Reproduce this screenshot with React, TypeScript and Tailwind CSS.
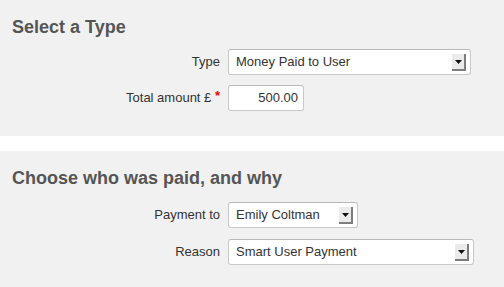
const font = { fontFamily: '"Liberation Sans", Arial, Helvetica, sans-serif' }

function DropButton() {
  return (
    <div className="mb-[3px] flex h-[17px] w-[14px] shrink-0 items-center justify-center border-r-2 border-b-2 border-r-[#7d7d7d] border-b-[#7d7d7d] bg-[#ebebeb]">
      <svg width="7" height="4" viewBox="0 0 7 4">
        <path d="M0 0h7L3.5 4z" fill="#111" />
      </svg>
    </div>
  )
}

function FakeSelect({ value, width }: { value: string; width: string }) {
  return (
    <div
      className={`flex h-[26px] items-stretch rounded-[3px] border border-[#c9c9c9] border-t-[#b9b9b9] bg-white pr-[4px] ${width}`}
    >
      <span className="flex flex-1 items-center pl-[7px] text-[13px] text-[#333]">{value}</span>
      <div className="flex items-end">
        <DropButton />
      </div>
    </div>
  )
}

function Row({ label, children }: { label: React.ReactNode; children: React.ReactNode }) {
  return (
    <div className="flex items-center">
      <div className="w-[221px] pr-[1px] text-right text-[13px] text-[#333]">{label}</div>
      <div className="pl-[7px]">{children}</div>
    </div>
  )
}

export default function App() {
  return (
    <div className="flex min-h-screen flex-col bg-white" style={font}>
      <section className="h-[136px] bg-[#f1f1f1] pt-[17px]">
        <h2 className="pl-[12px] text-[18px] leading-[20px] font-bold text-[#555]">Select a Type</h2>
        <div className="mt-[12px] flex flex-col gap-[10px]">
          <Row label="Type">
            <FakeSelect value="Money Paid to User" width="w-[243px]" />
          </Row>
          <Row
            label={
              <>
                Total amount £ <span className="relative -top-[2px] font-bold text-[#e00]">*</span>
              </>
            }
          >
            <div className="flex h-[26px] w-[76px] items-center justify-end rounded-[3px] border border-[#c9c9c9] border-t-[#b9b9b9] bg-white pr-[5px] text-[13px] text-[#333]">
              500.00
            </div>
          </Row>
        </div>
      </section>
      <div className="h-[15px]" />
      <section className="flex-1 bg-[#f1f1f1] pt-[17px]">
        <h2 className="pl-[12px] text-[18px] leading-[20px] font-bold text-[#555]">
          Choose who was paid, and why
        </h2>
        <div className="mt-[14px] flex flex-col gap-[11px]">
          <Row label="Payment to">
            <FakeSelect value="Emily Coltman" width="w-[130px]" />
          </Row>
          <Row label="Reason">
            <FakeSelect value="Smart User Payment" width="w-[246px]" />
          </Row>
        </div>
      </section>
    </div>
  )
}
